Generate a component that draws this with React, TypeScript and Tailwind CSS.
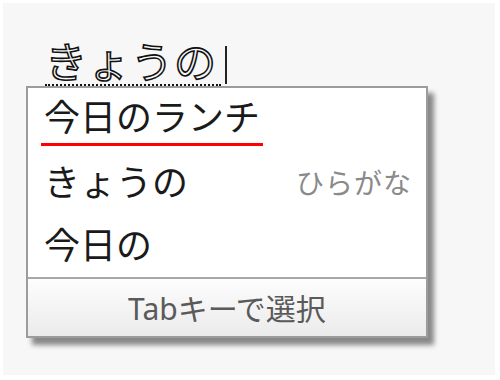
import React from "react";

export default function App() {
  return (
    <div className="w-[500px] h-[380px] bg-white pt-[3px] pl-[3px] pr-[5px] pb-[5px] font-['Noto_Sans','Noto_Sans_CJK_JP',sans-serif]">
      <div className="h-full w-full bg-[#f7f7f7] pl-[23px] pt-[37px]">
        {/* composition input line */}
        <div className="h-[46px] flex items-end pl-[19px]">
          <span className="text-[42px] leading-[44px] tracking-[1px] text-[#f7f7f7] [-webkit-text-stroke:1.6px_#111] border-b-2 border-dotted border-[#111] pr-[4px]">
            きょうの
          </span>
          <span className="inline-block w-[2px] h-[38px] bg-[#222] ml-[4px] mb-[2px]" />
        </div>

        {/* candidate window */}
        <div className="w-[402px] border-2 border-[#9c9c9c] bg-white shadow-[6px_7px_5px_rgba(0,0,0,0.45)]">
          <div className="h-[63px] flex items-start pl-[13px] pt-[9px]">
            <span className="inline-block text-[36px] leading-[42px] text-[#1a1a1a] border-b-[3px] border-[#ff0000] px-[3px] pb-[4px]">
              今日のランチ
            </span>
          </div>
          <div className="h-[63px] flex items-center justify-between pl-[16px] pr-[14px]">
            <span className="text-[36px] leading-[42px] text-[#1a1a1a]">きょうの</span>
            <span className="text-[28px] leading-[34px] text-[#8a8a8a] tracking-[1px]">ひらがな</span>
          </div>
          <div className="h-[63px] flex items-center pl-[16px]">
            <span className="text-[36px] leading-[42px] text-[#1a1a1a]">今日の</span>
          </div>
          <div className="h-[59px] border-t-2 border-[#a8a8a8] bg-gradient-to-b from-[#fdfdfd] to-[#ebebeb] flex items-center justify-center">
            <span className="text-[30px] leading-[36px] text-[#5a5a5a] pt-[2px]">Tabキーで選択</span>
          </div>
        </div>
      </div>
    </div>
  );
}
